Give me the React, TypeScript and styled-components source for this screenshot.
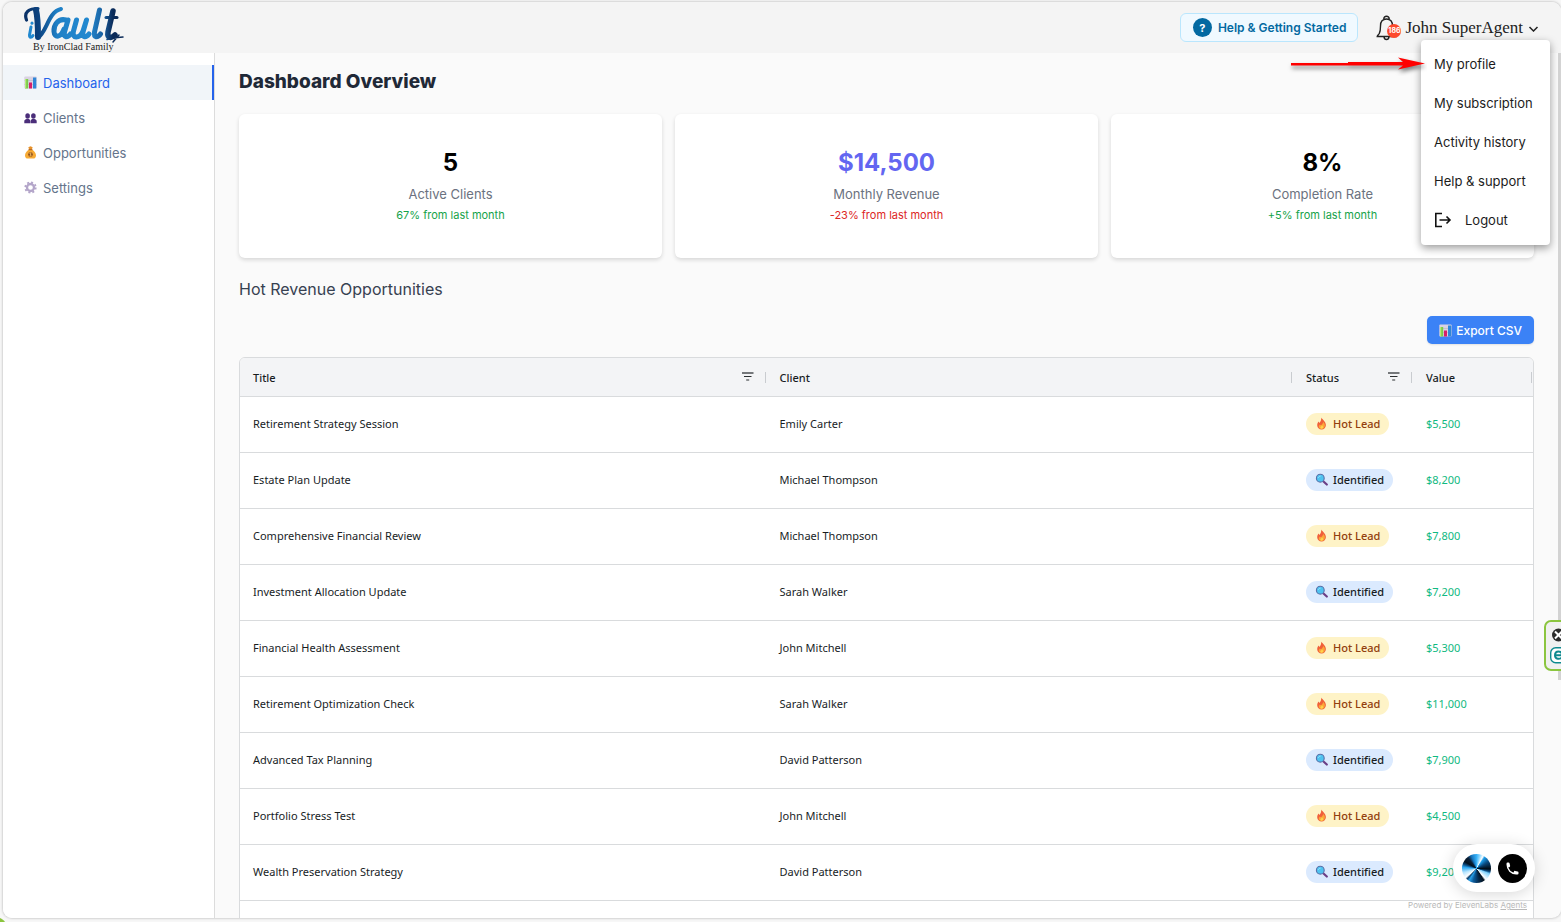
import React from "react";
import styled, { createGlobalStyle, css } from "styled-components";

const GlobalStyle = createGlobalStyle`
  *, *::before, *::after { box-sizing: border-box; }
  body { margin: 0; background: #f7f7f7; font-family: Inter, "Liberation Sans", sans-serif; }
  button { font: inherit; color: inherit; border: 0; background: none; padding: 0; cursor: pointer; }
  h1, h2, p, ul { margin: 0; padding: 0; }
  svg { display: block; flex: none; }
`;

const Window = styled.div`
  position: relative;
  display: flex;
  flex-direction: column;
  height: 100vh;
  padding: 2px 0 4px 3px;
  overflow: hidden;
`;

const Frame = styled.div`
  display: flex;
  flex-direction: column;
  flex: 1;
  min-height: 0;
  border-radius: 9px;
  overflow: hidden;
  background: #fafafa;
  box-shadow: 0 0 2px 1px #d3d3d3;
`;

const Corner = styled.svg`
  position: absolute;
  left: 0;
  bottom: 0;
`;

const Header = styled.header`
  display: flex;
  align-items: center;
  justify-content: space-between;
  height: 51px;
  flex: none;
  padding: 0 22px 0 20px;
  background: #f4f4f4;
`;

const HeaderTools = styled.div`
  display: flex;
  align-items: center;
  height: 100%;
`;

const HelpButton = styled.button`
  display: flex;
  align-items: center;
  gap: 6px;
  height: 29px;
  padding: 0 11px 0 12px;
  margin-right: 18px;
  border: 1px solid #bae6fd;
  border-radius: 6px;
  background: #f0f9ff;
  color: #0369a1;
  font-size: 12px;
  font-weight: 600;
`;

const QuestionMark = styled.span`
  display: grid;
  place-items: center;
  width: 19px;
  height: 19px;
  border-radius: 50%;
  background: #0369a1;
  color: #fff;
  font-size: 11px;
  font-weight: 700;
`;

const BellButton = styled.button`
  position: relative;
  width: 22px;
  height: 26px;
  margin-right: 7px;
`;

const BellBadge = styled.span`
  position: absolute;
  right: -3px;
  bottom: 3px;
  display: grid;
  place-items: center;
  width: 14px;
  height: 14px;
  border-radius: 50%;
  background: #fd4a2c;
  color: #fff;
  font-size: 7px;
  font-weight: 700;
`;

const UserButton = styled.button`
  display: flex;
  align-items: center;
  gap: 5px;
  color: #222;
  font-family: "Liberation Serif", serif;
  font-size: 17px;
`;

const Body = styled.div`
  display: flex;
  flex: 1;
  min-height: 0;
`;

const Sidebar = styled.nav`
  width: 212px;
  flex: none;
  padding-top: 12px;
  border-right: 1px solid #dcdcdc;
  background: #fff;
`;

const NavLink = styled.a<{ $active?: boolean }>`
  display: flex;
  align-items: center;
  gap: 6px;
  height: 35px;
  padding-left: 21px;
  color: #64748b;
  font-size: 13px;
  text-decoration: none;
  ${(p) =>
    p.$active &&
    css`
      background: #f1f5f9;
      border-right: 2px solid #2563eb;
      color: #2563eb;
    `}
`;

const Main = styled.main`
  flex: 1;
  min-width: 0;
  padding: 17px 24px 0;
  overflow: hidden;
`;

const ScrollTrack = styled.div`
  display: grid;
  grid-template-rows: 29fr 11fr;
  width: 3px;
  flex: none;
  background: #fafafa;
`;

const ScrollThumb = styled.div`
  background: #d3d3d3;
`;

const PageTitle = styled.h1`
  color: #1f2937;
  font-size: 19px;
  line-height: 24px;
  font-weight: 800;
`;

const Cards = styled.section`
  display: grid;
  grid-template-columns: repeat(3, 1fr);
  gap: 13px;
  margin-top: 20px;
`;

const Card = styled.article`
  display: flex;
  flex-direction: column;
  align-items: center;
  height: 144px;
  padding-top: 32px;
  border-radius: 6px;
  background: #fff;
  box-shadow: 0 2px 4px rgba(0, 0, 0, 0.14);
`;

const CardValue = styled.p<{ $color: string }>`
  color: ${(p) => p.$color};
  font-size: 24px;
  line-height: 34px;
  font-weight: 700;
`;

const CardLabel = styled.p`
  margin-top: 4px;
  color: #6b7280;
  font-size: 13px;
  line-height: 20px;
`;

const CardTrend = styled.p<{ $down?: boolean }>`
  margin-top: 3px;
  color: ${(p) => (p.$down ? "#dc2626" : "#16a34a")};
  font-size: 11px;
  line-height: 16px;
`;

const SectionTitle = styled.h2`
  margin-top: 19px;
  color: #374151;
  font-size: 16px;
  line-height: 24px;
  font-weight: 400;
`;

const Actions = styled.div`
  display: flex;
  justify-content: flex-end;
  margin: 15px 0 13px;
`;

const ExportButton = styled.button`
  display: flex;
  align-items: center;
  gap: 4px;
  height: 28px;
  padding: 0 12px;
  border-radius: 5px;
  background: #3b82f6;
  color: #fff;
  font-size: 12px;
  font-weight: 500;
  box-shadow: 0 1px 2px rgba(0, 0, 0, 0.1);
`;

const TableBox = styled.div`
  border: 1px solid #d9dbdd;
  border-radius: 6px;
  overflow: hidden;
  background: #fff;
`;

const Table = styled.table`
  width: 100%;
  table-layout: fixed;
  border-collapse: separate;
  border-spacing: 0;
  color: #181d1f;
  font-family: "Noto Sans", sans-serif;
  font-size: 11px;
`;

const Th = styled.th<{ $narrow?: boolean }>`
  position: relative;
  width: ${(p) => (p.$narrow ? "120px" : "auto")};
  height: 39px;
  padding: 0 13px;
  border-bottom: 1px solid #d9dbdd;
  background: #f3f4f6;
  font-weight: 500;
  text-align: left;
  &::after {
    content: "";
    position: absolute;
    right: 1px;
    top: 14px;
    width: 1px;
    height: 11px;
    background: #c9ccd0;
  }
`;

const HeadCell = styled.div`
  display: flex;
  align-items: center;
  justify-content: space-between;
  padding-top: 1px;
`;

const FilterButton = styled.button`
  padding-bottom: 3px;
`;

const Td = styled.td<{ $money?: boolean }>`
  height: 56px;
  padding: 0 13px 2px;
  border-bottom: 1px solid #d9dbdd;
  color: ${(p) => (p.$money ? "#10b981" : "inherit")};
`;

const Pill = styled.span<{ $hot: boolean }>`
  display: inline-flex;
  align-items: center;
  gap: 5px;
  height: 22px;
  padding: 0 9px;
  border-radius: 11px;
  background: ${(p) => (p.$hot ? "#fef3c7" : "#dbeafe")};
  color: ${(p) => (p.$hot ? "#92400e" : "#181d1f")};
  font-weight: 500;
  vertical-align: middle;
`;

const Menu = styled.ul`
  position: absolute;
  top: 40px;
  right: 11px;
  width: 129px;
  padding: 5px 0;
  border-radius: 4px;
  background: #fff;
  list-style: none;
  box-shadow: 0 3px 8px rgba(0, 0, 0, 0.4);
`;

const MenuItem = styled.button`
  display: flex;
  align-items: center;
  gap: 13px;
  width: 100%;
  height: 39px;
  padding: 0 0 1px 13px;
  color: #1c1c1c;
  font-size: 13px;
  text-align: left;
`;

const Arrow = styled.svg`
  position: absolute;
  top: 54px;
  right: 134px;
`;

const ArrowShape = styled.path`
  fill: #f00;
  filter: drop-shadow(1px 3px 2px rgba(0, 0, 0, 0.5));
`;

const CallWidget = styled.div`
  position: absolute;
  right: 26px;
  bottom: 30px;
  display: flex;
  align-items: center;
  gap: 7px;
  height: 48px;
  padding: 0 8px 0 9px;
  border-radius: 24px;
  background: #fff;
  box-shadow: 0 2px 16px rgba(0, 0, 0, 0.16);
`;

const CallButton = styled.button`
  display: grid;
  place-items: center;
  width: 29px;
  height: 29px;
  border-radius: 50%;
  background: #000;
`;

const Orb = styled.span`
  width: 29px;
  height: 29px;
  border-radius: 50%;
  background: conic-gradient(
    #36b0f6 0deg, #8fd8ff 15deg, #ffffff 28deg, #1b9be8 36deg, #0a4a80 60deg, #000a14 92deg, #0d4f86 104deg,
    #7fd0fa 112deg, #ffffff 140deg, #04121f 148deg, #062c50 170deg, #0b5c9c 195deg, #2ba2ea 212deg,
    #0c3f6c 222deg, #ffffff 230deg, #b9e6ff 252deg, #2aa5f0 276deg, #0a4a80 288deg, #02101d 300deg, #0a2038 322deg,
    #1576c0 338deg, #36b0f6 360deg
  );
`;

const Powered = styled.p`
  position: absolute;
  right: 34px;
  bottom: 11px;
  color: #b9b9b9;
  font-size: 8px;
  line-height: 12px;
  a { color: inherit; }
`;

const SideTab = styled.div`
  position: absolute;
  right: -6px;
  top: 620px;
  display: flex;
  flex-direction: column;
  gap: 4px;
  width: 23px;
  height: 51px;
  padding: 6px 0 0 4px;
  border: 2px solid #8bc53f;
  border-radius: 7px;
  background: #f0f0f0;
`;

const ChartIcon = ({ size = 13 }: { size?: number }) => (
  <svg width={size} height={size} viewBox="0 0 13 13" aria-hidden="true">
    <rect x="0.3" y="0.5" width="12.4" height="12" rx="1" fill="#d9d2e2" />
    <path d="M.5 4.5h12M.5 8.5h12" stroke="#b8aec6" strokeWidth=".6" />
    <rect x="1" y="3" width="3.2" height="9.5" fill="#7ccb4a" />
    <rect x="1" y="3" width="1.2" height="9.5" fill="#b5ea7c" />
    <rect x="5" y="6.5" width="3" height="6" fill="#d61f6a" />
    <rect x="9" y="1.5" width="3.3" height="11" fill="#2f86d8" />
  </svg>
);

const ClientsIcon = () => (
  <svg width="13" height="13" viewBox="0 0 13 13" fill="#4b2e7a" aria-hidden="true">
    <ellipse cx="3.6" cy="5" rx="2.3" ry="2.7" />
    <ellipse cx="9.4" cy="5" rx="2.3" ry="2.7" />
    <path d="M.3 12.300V10.200c0-1.300 1.300-1.900 2.300-2.200h2c1 .3 1.700.9 1.700 2.200v2.100zM6.700 12.300V10.200c0-1.300.7-1.900 1.700-2.200h2c1 .3 2.300.9 2.300 2.200v2.100z" />
  </svg>
);

const MoneyBagIcon = () => (
  <svg width="13" height="13" viewBox="0 0 13 13" aria-hidden="true">
    <path d="M4.300 1.200 6.500.3l2.200.9-.9 2.300H5.200z" fill="#e8922a" />
    <path d="M5 3.400h3c2.400 1.400 4 3.900 4 6 0 2-1.200 3.100-2.700 3.100H3.700C2.200 12.500 1 11.400 1 9.400c0-2.100 1.600-4.600 4-6z" fill="#f7ab35" />
    <path d="M4.600 3.700h3.800" stroke="#a85a1a" strokeWidth="1" />
    <circle cx="6.500" cy="8.500" r="2.300" fill="#8a4b1c" />
    <path d="M7.400 7.500c-.5-.5-1.800-.5-1.800.2s1.800.6 1.800 1.500-1.400.8-1.900.2M6.500 6.700v3.600" stroke="#f9c463" strokeWidth=".6" fill="none" />
  </svg>
);

const GearIcon = () => (
  <svg width="13" height="13" viewBox="0 0 13 13" fill="none" aria-hidden="true">
    <circle cx="6.500" cy="6.500" r="5.200" stroke="#b3a5c9" strokeWidth="1.800" strokeDasharray="2 2.080" />
    <circle cx="6.500" cy="6.500" r="3.500" stroke="#b3a5c9" strokeWidth="2.300" />
  </svg>
);

const FireIcon = () => (
  <svg width="13" height="13" viewBox="0 0 13 13" aria-hidden="true">
    <path d="M6.200.5c.6 1.700 4.700 3.700 4.700 7.500 0 2.700-1.900 4.500-4.300 4.500S2.200 10.800 2.200 8.300c0-1.700.7-2.900 1.400-3.800l.8 1.400C5.800 4.500 6.400 2.700 6.200.5z" fill="#f0603a" />
    <path d="M8.200 5c1.400 1.400 1.900 2.600 1.600 4.100-.3 1.800-1.500 3-3.100 3-1.700 0-2.900-1.100-2.900-2.500 0-1 .5-1.700 1.100-2.200l.8.900C7 7.600 8 6.400 8.200 5z" fill="#fba63a" />
    <path d="M7 8.300c1 .9 1.300 1.500 1.100 2.300-.2.700-.8 1.200-1.500 1.200s-1.300-.5-1.300-1.200c0-.9 1.400-1.200 1.700-2.300z" fill="#ffd24d" />
  </svg>
);

const SearchIcon = () => (
  <svg width="13" height="13" viewBox="0 0 13 13" fill="none" aria-hidden="true">
    <path d="m8.500 8.500 3.300 3" stroke="#6b3f86" strokeWidth="2.200" strokeLinecap="round" />
    <circle cx="5.300" cy="5.200" r="3.900" fill="#4fc3f0" stroke="#5a6fa8" strokeWidth="1.100" />
    <path d="M3.300 4.600c.4-.9 1-1.300 1.900-1.400" stroke="#a8e6fb" strokeWidth=".8" strokeLinecap="round" />
  </svg>
);

const FilterIcon = () => (
  <svg width="12" height="9" viewBox="0 0 12 9" aria-hidden="true">
    <path d="M0 1h11.500" stroke="#75787b" strokeWidth="2" />
    <path d="M2 4.500h7.500M4.200 8h3" stroke="#2a2e30" strokeWidth="1.200" />
  </svg>
);

const Logo = () => (
  <svg width="104" height="49" viewBox="0 0 104 49" role="img" aria-label="iVault By IronClad Family">
    <defs>
      <linearGradient id="vault" gradientUnits="userSpaceOnUse" x1="0" y1="0" x2="100" y2="0">
        <stop offset="0" stopColor="#0b2f63" />
        <stop offset=".16" stopColor="#0c4380" />
        <stop offset=".34" stopColor="#1f80c6" />
        <stop offset=".66" stopColor="#2389d0" />
        <stop offset=".8" stopColor="#1a5f9f" />
        <stop offset=".9" stopColor="#0a2a58" />
      </linearGradient>
    </defs>
    <g fill="none" stroke="url(#vault)" strokeLinecap="round" strokeLinejoin="round">
      <path d="M3.500 17C.5 9 6 5.500 15 5.500" strokeWidth="3.200" />
      <path d="M13 7c2 8 2 18 2 27" strokeWidth="6" />
      <path d="M15 34.500C24 29 25 9 38 6" strokeWidth="4" />
      <path d="M43 17c-8-2-12.500 5-12 11.500.500 7 7 6 10-2.500M45 17l-3.500 12c-1 6 3 6 6 2" strokeWidth="5" />
      <path d="m53.500 17-3 11c-2 8 6 8 9.500 0l3.500-11-3.500 12c-1 6 3 6 6 2" strokeWidth="5" />
      <path d="m76.500 7-5 22c-1 6 3 6 6 2" strokeWidth="5" />
      <path d="m90 8-5 21c-1 6 3 7 7 3" strokeWidth="5.500" />
      <path d="M83 14.500h11" strokeWidth="3" />
      <path d="M84 36.500c6-2 10-2 16-2.500M96 32l-6 7" strokeWidth="1.500" />
      <path d="M8 24 6.500 32c0 3.500 2 2.500 3.500.5" stroke="#2188cf" strokeWidth="3" />
      <path d="M9 20v.2" stroke="#2188cf" strokeWidth="3" />
    </g>
    <text x="10" y="47" fontFamily="Liberation Serif, serif" fontSize="10" fill="#222">
      By IronClad Family
    </text>
  </svg>
);

const BellIcon = () => (
  <svg width="22" height="26" viewBox="0 0 22 26" fill="none" stroke="#222" strokeWidth="1.400" aria-hidden="true">
    <path d="M7.800 4.500c-.5-4.300 5.900-4.300 5.400 0M3.300 18.500c1-2 1.200-3.500 1.200-7.500 0-4.500 2.500-7 6-7s6 2.500 6 7c0 4 0 6 3 10.500H1.200C1.200 20.500 2.800 19.500 3.300 18.500zM8 21.500c0 4 5 4 5 0" />
  </svg>
);

const ChevronIcon = () => (
  <svg width="11" height="8" viewBox="0 0 11 8" fill="none" aria-hidden="true">
    <path d="m1.500 3 4 4 4-4" stroke="#222" strokeWidth="1.500" />
  </svg>
);

const LogoutIcon = () => (
  <svg width="18" height="16" viewBox="0 0 18 16" fill="none" stroke="#111" strokeWidth="1.600" aria-hidden="true">
    <path d="M8 1.500H1.800v13H8M5.500 8H16M12.500 4.500 16 8l-3.500 3.500" />
  </svg>
);

const PhoneIcon = () => (
  <svg width="15" height="15" viewBox="0 0 20 20" fill="#fff" aria-hidden="true">
    <path d="M2 3.500A1.500 1.500 0 0 1 3.500 2h1.150a1.500 1.500 0 0 1 1.470 1.180l.71 3.220a1.500 1.500 0 0 1-1.060 1.770l-.93.270c-.27.080-.39.370-.29.600a11 11 0 0 0 6.410 6.410c.23.100.52-.02.600-.29l.27-.93a1.500 1.500 0 0 1 1.770-1.060l3.220.71A1.500 1.500 0 0 1 18 15.350v1.150a1.500 1.500 0 0 1-1.500 1.500H15A13 13 0 0 1 2 5z" />
  </svg>
);

const navItems = [
  { label: "Dashboard", icon: <ChartIcon />, active: true },
  { label: "Clients", icon: <ClientsIcon /> },
  { label: "Opportunities", icon: <MoneyBagIcon /> },
  { label: "Settings", icon: <GearIcon /> },
];

const stats = [
  { value: "5", label: "Active Clients", trend: "67% from last month", color: "#000" },
  { value: "$14,500", label: "Monthly Revenue", trend: "-23% from last month", color: "#6366f1", down: true },
  { value: "8%", label: "Completion Rate", trend: "+5% from last month", color: "#000" },
];

const rows: [string, string, boolean, string][] = [
  ["Retirement Strategy Session", "Emily Carter", true, "$5,500"],
  ["Estate Plan Update", "Michael Thompson", false, "$8,200"],
  ["Comprehensive Financial Review", "Michael Thompson", true, "$7,800"],
  ["Investment Allocation Update", "Sarah Walker", false, "$7,200"],
  ["Financial Health Assessment", "John Mitchell", true, "$5,300"],
  ["Retirement Optimization Check", "Sarah Walker", true, "$11,000"],
  ["Advanced Tax Planning", "David Patterson", false, "$7,900"],
  ["Portfolio Stress Test", "John Mitchell", true, "$4,500"],
  ["Wealth Preservation Strategy", "David Patterson", false, "$9,200"],
];

const columns = [
  { name: "Title", filter: true },
  { name: "Client" },
  { name: "Status", filter: true, narrow: true },
  { name: "Value", narrow: true },
];

export default function App() {
  return (
    <Window>
      <GlobalStyle />
      <Corner width="6" height="4" aria-hidden="true">
        <path d="M0 0c2 1 4 2 5 4H0z" fill="#8bc53f" />
      </Corner>
      <Frame>
        <Header>
          <Logo />
          <HeaderTools>
            <HelpButton>
              <QuestionMark>?</QuestionMark>
              Help &amp; Getting Started
            </HelpButton>
            <BellButton aria-label="Notifications">
              <BellIcon />
              <BellBadge>186</BellBadge>
            </BellButton>
            <UserButton aria-haspopup="menu" aria-expanded="true">
              John SuperAgent
              <ChevronIcon />
            </UserButton>
          </HeaderTools>
        </Header>
        <Body>
          <Sidebar>
            {navItems.map((item) => (
              <NavLink key={item.label} href="#" $active={item.active}>
                {item.icon}
                {item.label}
              </NavLink>
            ))}
          </Sidebar>
          <Main>
            <PageTitle>Dashboard Overview</PageTitle>
            <Cards>
              {stats.map((s) => (
                <Card key={s.label}>
                  <CardValue $color={s.color}>{s.value}</CardValue>
                  <CardLabel>{s.label}</CardLabel>
                  <CardTrend $down={s.down}>{s.trend}</CardTrend>
                </Card>
              ))}
            </Cards>
            <SectionTitle>Hot Revenue Opportunities</SectionTitle>
            <Actions>
              <ExportButton>
                <ChartIcon />
                Export CSV
              </ExportButton>
            </Actions>
            <TableBox>
              <Table>
                <thead>
                  <tr>
                    {columns.map((c) => (
                      <Th key={c.name} $narrow={c.narrow}>
                        <HeadCell>
                          {c.name}
                          {c.filter && (
                            <FilterButton aria-label={`Filter ${c.name}`}>
                              <FilterIcon />
                            </FilterButton>
                          )}
                        </HeadCell>
                      </Th>
                    ))}
                  </tr>
                </thead>
                <tbody>
                  {rows.map(([title, client, hot, value]) => (
                    <tr key={title}>
                      <Td>{title}</Td>
                      <Td>{client}</Td>
                      <Td>
                        <Pill $hot={hot}>
                          {hot ? <FireIcon /> : <SearchIcon />}
                          {hot ? "Hot Lead" : "Identified"}
                        </Pill>
                      </Td>
                      <Td $money>{value}</Td>
                    </tr>
                  ))}
                  <tr>
                    <Td colSpan={4} />
                  </tr>
                </tbody>
              </Table>
            </TableBox>
          </Main>
          <ScrollTrack>
            <ScrollThumb />
          </ScrollTrack>
        </Body>
      </Frame>

      <Menu role="menu">
        {["My profile", "My subscription", "Activity history", "Help & support"].map((label) => (
          <li key={label} role="none">
            <MenuItem role="menuitem">{label}</MenuItem>
          </li>
        ))}
        <li role="none">
          <MenuItem role="menuitem">
            <LogoutIcon />
            Logout
          </MenuItem>
        </li>
      </Menu>

      <Arrow width="140" height="22" viewBox="0 0 140 22" aria-hidden="true">
        <ArrowShape d="M4 9H61V8h55l-5-4.500 27 6-27 6 5-4H4z" />
      </Arrow>

      <CallWidget>
        <Orb />
        <CallButton aria-label="Start a call">
          <PhoneIcon />
        </CallButton>
      </CallWidget>
      <Powered>
        Powered by ElevenLabs <a href="#">Agents</a>
      </Powered>

      <SideTab>
        <svg width="16" height="15" viewBox="0 0 16 15" aria-hidden="true">
          <circle cx="8.500" cy="7" r="6.500" fill="#2b2b2b" />
          <path d="m5 3.500 7 7m0-7-7 7" stroke="#fff" strokeWidth="2" />
        </svg>
        <svg width="18" height="17" viewBox="0 0 18 17" fill="none" aria-hidden="true">
          <rect x=".7" y=".700" width="18" height="15" rx="5" fill="#fff" stroke="#0e8a8f" strokeWidth="1.400" />
          <path d="M5 8.300h7c0-5-7-5-7 0 0 4.200 5 4.200 7 2" stroke="#0e8a8f" strokeWidth="2" />
        </svg>
      </SideTab>
    </Window>
  );
}
